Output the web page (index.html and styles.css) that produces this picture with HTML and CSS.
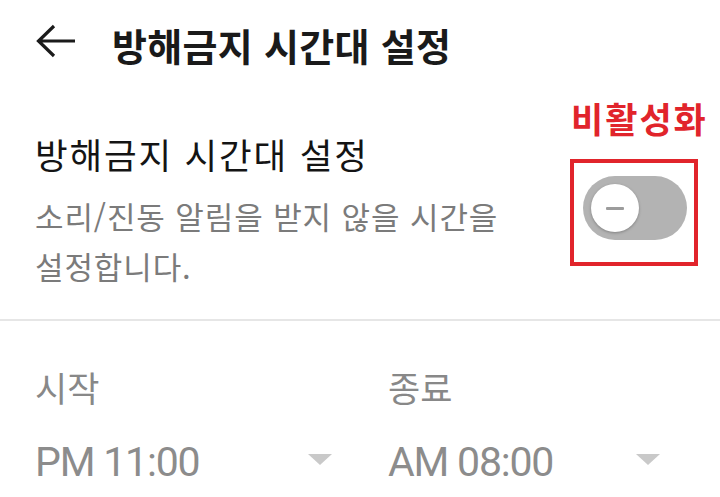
FILE: index.html
```html
<!DOCTYPE html>
<html lang="ko">
<head>
<meta charset="utf-8">
<title>방해금지 시간대 설정</title>
<link rel="stylesheet" href="styles.css">
</head>
<body>
<div class="screen">
  <header class="appbar">
    <svg class="back" width="40" height="34" viewBox="0 0 40 34" aria-hidden="true">
      <path d="M2.5 17 H39 M18 2 L2.5 17 L18 32" fill="none" stroke="#1b1b1b" stroke-width="3.2" stroke-linecap="butt" stroke-linejoin="miter"/>
    </svg>
    <h1 class="appbar-title">방해금지 시간대 설정</h1>
  </header>

  <section class="setting">
    <div class="setting-text">
      <div class="setting-title">방해금지 시간대 설정</div>
      <div class="setting-desc">소리/진동 알림을 받지 않을 시간을<br>설정합니다.</div>
    </div>
    <div class="setting-control">
      <div class="annot-label">비활성화</div>
      <div class="annot-box">
        <div class="switch">
          <div class="knob"><span class="minus"></span></div>
        </div>
      </div>
    </div>
  </section>

  <div class="divider"></div>

  <section class="times">
    <div class="time-col">
      <div class="time-label">시작</div>
      <div class="time-value"><span class="time-text">PM 11:00</span><span class="caret"></span></div>
    </div>
    <div class="time-col">
      <div class="time-label">종료</div>
      <div class="time-value"><span class="time-text">AM 08:00</span><span class="caret"></span></div>
    </div>
  </section>
</div>
</body>
</html>
```

FILE: styles.css
```css
* { box-sizing: border-box; }
html, body {
  margin: 0;
  padding: 0;
  background: #ffffff;
}
body {
  font-family: "Noto Sans CJK KR", "Noto Sans", sans-serif;
  width: 720px;
  height: 497px;
  overflow: hidden;
}
.screen {
  width: 720px;
}

/* App bar */
.appbar {
  height: 90px;
  display: flex;
  align-items: center;
  padding-left: 36px;
  gap: 36px;
}
.back {
  display: block;
  margin-top: -8px;
}
.appbar-title {
  margin: 0;
  font-size: 38px;
  font-weight: 700;
  color: #1a1a1a;
  line-height: 90px;
  letter-spacing: 0.3px;
}

/* Setting row */
.setting {
  display: flex;
  justify-content: space-between;
  align-items: flex-start;
  padding: 0 13px 0 35px;
  height: 229px;
}
.setting-text {
  padding-top: 39px;
}
.setting-title {
  font-size: 35.5px;
  line-height: 50px;
  color: #141414;
  letter-spacing: 1.8px;
}
.setting-desc {
  margin-top: 12px;
  font-size: 31px;
  line-height: 50px;
  color: #7b7b7b;
  letter-spacing: 0.9px;
}
.setting-control {
  width: 136px;
  display: flex;
  flex-direction: column;
  align-items: flex-start;
}
.annot-label {
  margin-top: 8px;
  font-size: 35px;
  font-weight: 700;
  line-height: 40px;
  color: #e1242b;
  letter-spacing: 2px;
  white-space: nowrap;
}
.annot-box {
  margin-top: 21px;
  margin-left: -1px;
  width: 128px;
  height: 107px;
  border: 4px solid #e1242b;
  padding: 13px 0 0 9px;
}
.switch {
  width: 104px;
  height: 64px;
  border-radius: 32px;
  background: #b3b3b3;
  display: flex;
  align-items: center;
  padding-left: 8px;
}
.knob {
  width: 48px;
  height: 48px;
  border-radius: 50%;
  background: #ffffff;
  box-shadow: 0 1px 3px rgba(0, 0, 0, 0.28);
  display: flex;
  align-items: center;
  justify-content: center;
}
.minus {
  display: block;
  width: 18px;
  height: 3px;
  background: #9c9c9c;
  border-radius: 1px;
}

/* Divider */
.divider {
  height: 2px;
  background: #e6e6e6;
}

/* Times */
.times {
  display: grid;
  grid-template-columns: 353px 1fr;
  padding: 0 4px 0 35px;
}
.time-col {
  padding-top: 46px;
}
.time-label {
  font-size: 35px;
  line-height: 40px;
  color: #888888;
}
.time-value {
  margin-top: 30px;
  height: 50px;
  display: flex;
  align-items: center;
  justify-content: space-between;
  padding-right: 56px;
}
.time-text {
  font-family: "Roboto", "Noto Sans", sans-serif;
  font-size: 41px;
  line-height: 50px;
  color: #8c8c8c;
  letter-spacing: -1.2px;
}
.caret {
  width: 0;
  height: 0;
  border-left: 12px solid transparent;
  border-right: 12px solid transparent;
  border-top: 11px solid #c9c9c9;
  margin-bottom: 5px;
}
```
